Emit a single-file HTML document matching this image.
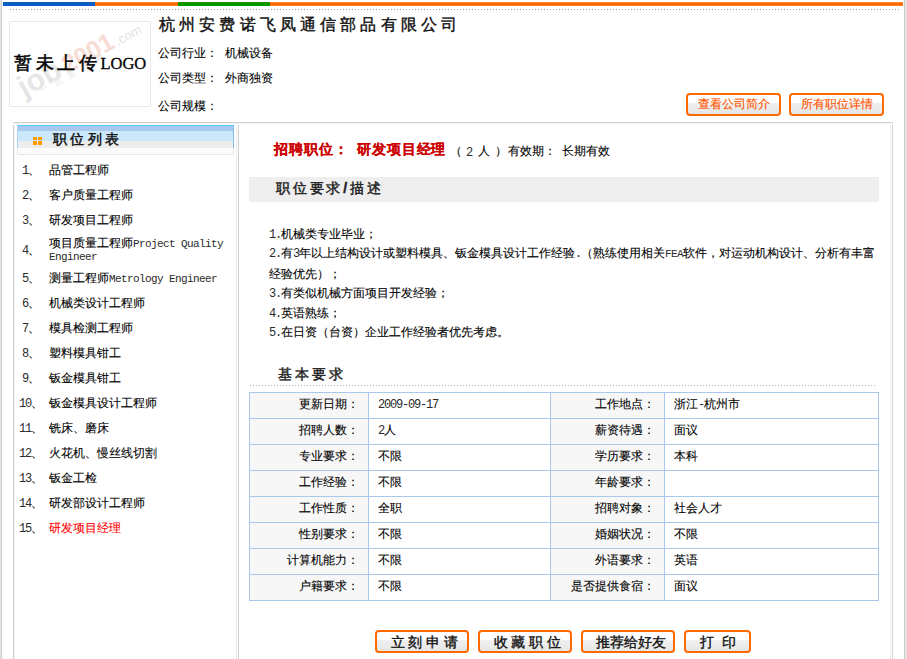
<!DOCTYPE html>
<html><head><meta charset="utf-8">
<style>
*{margin:0;padding:0;box-sizing:border-box}
html,body{width:907px;height:659px;overflow:hidden;background:#fff}
body{position:relative;font-family:"Liberation Sans",sans-serif;font-size:12px;color:#000;line-height:1;-webkit-text-stroke-width:0.1px}
.a{position:absolute}
.m{font-family:"Liberation Mono",monospace;font-size:12px;letter-spacing:-1.2px;-webkit-text-stroke-width:0;color:#2a2a2a}
.ml{font-family:"Liberation Mono",monospace;font-size:11px;letter-spacing:-0.6px;-webkit-text-stroke-width:0;color:#2a2a2a}
.t{white-space:nowrap}
/* edges */
#ledge{left:0;top:0;width:2px;height:659px;background:linear-gradient(to right,#e3e3e3 1px,#cfcfcf 1px)}
#redge{left:904px;top:0;width:3px;height:659px;background:linear-gradient(to right,#cfcfcf 1px,#e3e3e3 1px)}
/* top bar */
.bar{top:2px;height:4px}
#dots{left:10px;top:9px;width:889px;height:1px;background-image:linear-gradient(to right,#a0a0a0 1px,transparent 1px);background-size:3px 1px}
#logo{left:9px;top:21px;width:142px;height:86px;border:1px solid #e8e8e8;overflow:hidden}
#title{left:159px;top:17px;font-size:16px;font-weight:normal;letter-spacing:4.15px;color:#111;-webkit-text-stroke-width:0.4px}
.info{left:158px;font-size:12px}
.obtn{height:23px;border:2px solid #ff6a00;border-radius:4px;background:linear-gradient(#fff 0,#fff 8px,#f0f0f0 8px,#e6e6e6 100%);color:#ff5500;font-size:12px;text-align:center;line-height:19px;-webkit-text-stroke-width:0.15px}
/* panels */
#ptop{left:13px;top:122px;width:880px;height:1px;background:#d2d2d2}
#ptop2{left:13px;top:123px;width:880px;height:1px;background:#f2f2f2}
#lpl{left:13px;top:125px;width:1px;height:534px;background:#d0d0d0}
#lpl2{left:14px;top:125px;width:1px;height:534px;background:#f0f0f0}
#lpr{left:236px;top:125px;width:1px;height:534px;background:#ececec}
#mpl{left:238px;top:125px;width:1px;height:534px;background:#cfcfcf}
#mpr1{left:890px;top:125px;width:1px;height:534px;background:#eeeeee}
#mpr2{left:892px;top:125px;width:1px;height:534px;background:#d2d2d2}
#lhead{left:17px;top:125px;width:217px;height:30px;border:1px solid #e6e6e6;border-top:0;border-left-color:#e8e8e8;background:linear-gradient(#5ac8fa 0,#5ac8fa 1px,#a8c8ee 1px,#a8c8ee 6px,#cce9fb 6px,#cce9fb 16px,#ededed 16px,#ededed 23px,#fbfbfb 23px)}
#lhead .ico{position:absolute;left:15px;top:12px;width:9px;height:8px;background:
 linear-gradient(#ff9900,#ff9900) 0 0/4px 3px no-repeat,
 linear-gradient(#ff9900,#ff9900) 5px 0/4px 3px no-repeat,
 linear-gradient(#ff9900,#ff9900) 0 4px/4px 4px no-repeat,
 linear-gradient(#ff9900,#ff9900) 5px 4px/4px 4px no-repeat}
#lhead .tt{position:absolute;left:35px;top:7px;font-size:14px;font-weight:normal;letter-spacing:3.3px;color:#111;-webkit-text-stroke-width:0.45px}
.num{left:13px;width:36px;text-align:center;font-size:12px}
.job{left:49px;font-size:12px}
/* main */
#recruit{left:274px;top:142px;font-size:14px;font-weight:bold;color:#cc0000}
#gbar{left:249px;top:177px;width:630px;height:25px;background:#eeeeee}
#gbar .tt{position:absolute;left:27px;top:4px;font-size:14px;font-weight:normal;letter-spacing:2.8px;color:#222;-webkit-text-stroke-width:0.45px}
.dl{left:269px;font-size:12px;line-height:14px}
#basic{left:278px;top:367px;font-size:14px;font-weight:normal;letter-spacing:3px;color:#222;-webkit-text-stroke-width:0.45px}
#dots2{left:250px;top:385px;width:627px;height:1px;background-image:linear-gradient(to right,#b0b0b0 1px,transparent 1px);background-size:3px 1px}
table{position:absolute;left:249px;top:392px;border-collapse:collapse;font-size:12px}
td{border:1px solid #a9c9ec;height:26px;padding:0 0 3px 0}
td.l{background:#f7f7f7;text-align:right;padding-right:9px}
td.v{background:#fff;padding-left:9px}
.bbtn{top:630px;height:23px;border:2px solid #ff6a00;border-radius:4px;background:linear-gradient(#fff 0,#fff 8px,#f0f0f0 8px,#e6e6e6 100%);font-size:14px;text-align:center;line-height:21px;color:#111;-webkit-text-stroke-width:0.35px}
</style></head><body>
<div id="ledge" class="a"></div>
<div id="redge" class="a"></div>
<div class="a bar" style="left:3px;width:92px;background:linear-gradient(#1e5c9c 1px,#0062cc 1px,#0062cc 3px,#0e55d0 3px)"></div>
<div class="a bar" style="left:95px;width:83px;background:linear-gradient(#ff8c28 1px,#ff6600 1px,#ff6600 3px,#ff8024 3px)"></div>
<div class="a bar" style="left:178px;width:92px;background:linear-gradient(#2f8a00 1px,#009900 1px)"></div>
<div class="a bar" style="left:270px;width:633px;background:linear-gradient(#ff8c28 1px,#ff6600 1px,#ff6600 3px,#ff8024 3px)"></div>
<div id="dots" class="a"></div>

<div id="logo" class="a">
<div class="a t" id="wm" style="left:17px;top:50px;transform:rotate(-29deg);-webkit-text-stroke-width:0;transform-origin:0 100%;font-family:'Liberation Sans',sans-serif;font-weight:bold;line-height:1">
<span style="font-size:30px;color:#e6e6e6;letter-spacing:0px">job</span><span style="font-size:25px;color:#f6dcd4;letter-spacing:0px;margin-left:4px">2001</span><span style="font-size:13px;color:#e3e3e3;font-weight:normal;margin-left:2px">.com</span>
</div>
<div class="a t" style="left:28px;top:66px;transform:rotate(-29deg);transform-origin:0 0;font-size:9px;color:#e9e9e9;letter-spacing:7px;-webkit-text-stroke-width:0">一览英才网</div>
<div class="a t" id="lt" style="left:4px;top:32px;font-family:'Liberation Serif',serif;font-size:18px;color:#000;letter-spacing:3.6px;-webkit-text-stroke:0.5px #000">暂未上传<span style="letter-spacing:0;font-size:16.5px;-webkit-text-stroke-width:0.3px">LOGO</span></div>
</div>

<div id="title" class="a t">杭州安费诺飞凤通信部品有限公司</div>
<div class="a info t" style="top:47px">公司行业：&nbsp;&nbsp;机械设备</div>
<div class="a info t" style="top:72px">公司类型：&nbsp;&nbsp;外商独资</div>
<div class="a info t" style="top:100px">公司规模：</div>
<div class="a obtn t" style="left:686px;top:93px;width:95px">查看公司简介</div>
<div class="a obtn t" style="left:789px;top:93px;width:95px">所有职位详情</div>

<div id="ptop" class="a"></div>
<div id="ptop2" class="a"></div>
<div id="lpl" class="a"></div>
<div id="lpl2" class="a"></div>
<div id="lpr" class="a"></div>
<div id="mpl" class="a"></div>
<div id="mpr1" class="a"></div>
<div id="mpr2" class="a"></div>

<div id="lhead" class="a"><div style="position:absolute;left:-1px;top:0;width:1px;height:23px;background:#a9d4f5"></div><div style="position:absolute;right:-1px;top:0;width:1px;height:23px;background:#7cc0f0"></div><div class="ico"></div><div class="tt">职位列表</div></div>

<div class="a num t" style="top:163px;line-height:14px"><span class=m>1</span>、</div>
<div class="a job t" style="top:163px;line-height:14px">品管工程师</div>
<div class="a num t" style="top:188px;line-height:14px"><span class=m>2</span>、</div>
<div class="a job t" style="top:188px;line-height:14px">客户质量工程师</div>
<div class="a num t" style="top:213px;line-height:14px"><span class=m>3</span>、</div>
<div class="a job t" style="top:213px;line-height:14px">研发项目工程师</div>
<div class="a num t" style="top:243px;line-height:14px"><span class=m>4</span>、</div>
<div class="a job" style="top:236.5px;line-height:12.5px;width:190px">项目质量工程师<span class=ml>Project Quality Engineer</span></div>
<div class="a num t" style="top:271px;line-height:14px"><span class=m>5</span>、</div>
<div class="a job t" style="top:271px;line-height:14px">测量工程师<span class=ml>Metrology Engineer</span></div>
<div class="a num t" style="top:295.5px;line-height:14px"><span class=m>6</span>、</div>
<div class="a job t" style="top:295.5px;line-height:14px">机械类设计工程师</div>
<div class="a num t" style="top:320.5px;line-height:14px"><span class=m>7</span>、</div>
<div class="a job t" style="top:320.5px;line-height:14px">模具检测工程师</div>
<div class="a num t" style="top:345.5px;line-height:14px"><span class=m>8</span>、</div>
<div class="a job t" style="top:345.5px;line-height:14px">塑料模具钳工</div>
<div class="a num t" style="top:370.5px;line-height:14px"><span class=m>9</span>、</div>
<div class="a job t" style="top:370.5px;line-height:14px">钣金模具钳工</div>
<div class="a num t" style="top:395.5px;line-height:14px"><span class=m>10</span>、</div>
<div class="a job t" style="top:395.5px;line-height:14px">钣金模具设计工程师</div>
<div class="a num t" style="top:420.5px;line-height:14px"><span class=m>11</span>、</div>
<div class="a job t" style="top:420.5px;line-height:14px">铣床、磨床</div>
<div class="a num t" style="top:445.5px;line-height:14px"><span class=m>12</span>、</div>
<div class="a job t" style="top:445.5px;line-height:14px">火花机、慢丝线切割</div>
<div class="a num t" style="top:470.5px;line-height:14px"><span class=m>13</span>、</div>
<div class="a job t" style="top:470.5px;line-height:14px">钣金工检</div>
<div class="a num t" style="top:495.5px;line-height:14px"><span class=m>14</span>、</div>
<div class="a job t" style="top:495.5px;line-height:14px">研发部设计工程师</div>
<div class="a num t" style="top:520.5px;line-height:14px"><span class=m>15</span>、</div>
<div class="a job t" style="top:520.5px;line-height:14px;color:#f00">研发项目经理</div>

<div id="recruit" class="a t" style="left:274px;letter-spacing:1px">招聘职位：</div>
<div class="a t" style="left:357px;top:142px;font-size:14px;font-weight:bold;color:#cc0000;letter-spacing:0.9px">研发项目经理</div>
<div class="a t" style="left:450px;top:145px">（</div>
<div class="a t m" style="left:466px;top:147px">2</div>
<div class="a t" style="left:478px;top:145px">人</div>
<div class="a t" style="left:495px;top:145px">）</div>
<div class="a t" style="left:508px;top:145px">有效期：</div>
<div class="a t" style="left:562px;top:145px">长期有效</div>
<div id="gbar" class="a"><div class="tt t">职位要求<span style="font-family:'Liberation Sans';font-weight:bold">/</span>描述</div></div>
<div class="a t dl" style="top:227px"><span class=m>1.</span>机械类专业毕业；</div>
<div class="a t dl" style="top:246px"><span class=m>2.</span>有<span class=m>3</span>年以上结构设计或塑料模具、钣金模具设计工作经验<span class=m>.</span>（熟练使用相关<span class=ml>FEA</span>软件，对运动机构设计、分析有丰富</div>
<div class="a t dl" style="top:267px">经验优先）；</div>
<div class="a t dl" style="top:286px"><span class=m>3.</span>有类似机械方面项目开发经验；</div>
<div class="a t dl" style="top:306px"><span class=m>4.</span>英语熟练；</div>
<div class="a t dl" style="top:325px"><span class=m>5.</span>在日资（台资）企业工作经验者优先考虑。</div>
<div id="basic" class="a t">基本要求</div>
<div id="dots2" class="a"></div>
<table>
<tr><td class="l" style="width:119px">更新日期：</td><td class="v" style="width:182px"><span class=m>2009-09-17</span></td><td class="l" style="width:114px">工作地点：</td><td class="v" style="width:214px">浙江<span class=m>-</span>杭州市</td></tr>
<tr><td class="l">招聘人数：</td><td class="v"><span class=m>2</span>人</td><td class="l">薪资待遇：</td><td class="v">面议</td></tr>
<tr><td class="l">专业要求：</td><td class="v">不限</td><td class="l">学历要求：</td><td class="v">本科</td></tr>
<tr><td class="l">工作经验：</td><td class="v">不限</td><td class="l">年龄要求：</td><td class="v"></td></tr>
<tr><td class="l">工作性质：</td><td class="v">全职</td><td class="l">招聘对象：</td><td class="v">社会人才</td></tr>
<tr><td class="l">性别要求：</td><td class="v">不限</td><td class="l">婚姻状况：</td><td class="v">不限</td></tr>
<tr><td class="l">计算机能力：</td><td class="v">不限</td><td class="l">外语要求：</td><td class="v">英语</td></tr>
<tr><td class="l">户籍要求：</td><td class="v">不限</td><td class="l">是否提供食宿：</td><td class="v">面议</td></tr>
</table>
<div class="a bbtn t" style="left:375px;width:94px;letter-spacing:3.7px;padding-left:8px">立刻申请</div>
<div class="a bbtn t" style="left:478px;width:94px;letter-spacing:3.7px;padding-left:8px">收藏职位</div>
<div class="a bbtn t" style="left:581px;width:94px;letter-spacing:0.2px;padding-left:6px">推荐给好友</div>
<div class="a bbtn t" style="left:684px;width:67px;letter-spacing:2px;padding-left:3px">打 印</div>


</body></html>
